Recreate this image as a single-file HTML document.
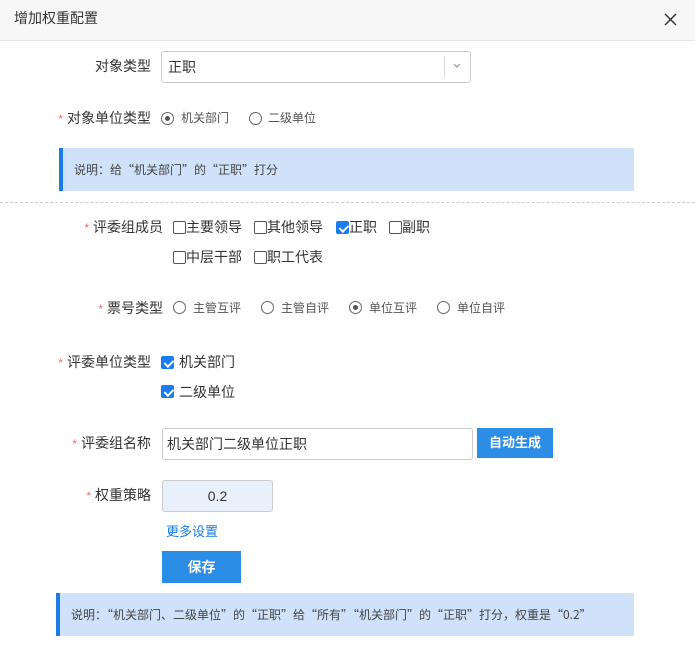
<!DOCTYPE html>
<html><head><meta charset="utf-8"><style>
*{margin:0;padding:0;box-sizing:border-box}
body{width:695px;height:648px;background:#fff;font-family:"Liberation Sans","Noto Sans CJK SC",sans-serif;color:#333;position:relative;overflow:hidden}
.a{position:absolute;white-space:nowrap}
.lbl{font-size:14px;text-align:right;line-height:20px}
.star{color:#f56c6c;font-size:12px;margin-right:4px}
.rad{position:absolute;width:13px;height:13px;border:1.5px solid #666;border-radius:50%}
.rad.on::after{content:"";position:absolute;left:2.5px;top:2.5px;width:5px;height:5px;border-radius:50%;background:#555}
.cb{position:absolute;width:13px;height:13px;border:1px solid #555;border-radius:2px;background:#fff}
.cb.on{background:#1a7cf2;border-color:#1a7cf2}
.cb.on::after{content:"";position:absolute;left:3.5px;top:0.5px;width:3.5px;height:7px;border:solid #fff;border-width:0 2px 2px 0;transform:rotate(45deg)}
.t12{font-size:12px;color:#555;line-height:16px}
.t14{font-size:14px;color:#333;line-height:20px}
.note{position:absolute;background:#cfe2fa;border-left:4px solid #1e7be6;font-size:12px;color:#444;padding-left:11px;font-family:"Noto Sans CJK SC",sans-serif}
</style></head><body>
<div class="a" style="left:0;top:0;width:695px;height:41px;background:#f7f7f7;border-bottom:1px solid #e6e6e6"></div>
<div class="a t14" style="left:14px;top:8px;font-size:14px">增加权重配置</div>
<svg class="a" style="left:664px;top:13px" width="13" height="13" viewBox="0 0 13 13"><path d="M1 1L12 12M12 1L1 12" stroke="#333" stroke-width="1.5"/></svg>

<div class="a lbl" style="left:60px;width:91px;top:56px">对象类型</div>
<div class="a" style="left:161px;top:51px;width:310px;height:32px;border:1px solid #ccc;border-radius:3px"></div>
<div class="a t14" style="left:168px;top:57px">正职</div>
<div class="a" style="left:444px;top:56px;width:1px;height:22px;background:#ddd"></div>
<svg class="a" style="left:453px;top:63px" width="8" height="6" viewBox="0 0 8 6"><path d="M1 1L4 4L7 1" stroke="#999" fill="none" stroke-width="1.2"/></svg>

<div class="a lbl" style="left:20px;width:131px;top:108px"><span class="star">*</span>对象单位类型</div>
<div class="rad on" style="left:161px;top:112px"></div><div class="a t12" style="left:181px;top:110px">机关部门</div>
<div class="rad" style="left:249px;top:112px"></div><div class="a t12" style="left:268px;top:110px">二级单位</div>

<div class="note" style="left:59px;top:148px;width:575px;height:43px;line-height:43px">说明：给“机关部门”的“正职”打分</div>
<div class="a" style="left:0;top:202px;width:695px;border-top:1px dashed #ccc"></div>

<div class="a lbl" style="left:40px;width:123px;top:217px"><span class="star">*</span>评委组成员</div>
<div class="cb" style="left:173px;top:221px"></div><div class="a t14" style="left:186px;top:217px">主要领导</div>
<div class="cb" style="left:254px;top:221px"></div><div class="a t14" style="left:267px;top:217px">其他领导</div>
<div class="cb on" style="left:336px;top:221px"></div><div class="a t14" style="left:349px;top:217px">正职</div>
<div class="cb" style="left:389px;top:221px"></div><div class="a t14" style="left:402px;top:217px">副职</div>
<div class="cb" style="left:173px;top:251px"></div><div class="a t14" style="left:186px;top:247px">中层干部</div>
<div class="cb" style="left:254px;top:251px"></div><div class="a t14" style="left:267px;top:247px">职工代表</div>

<div class="a lbl" style="left:40px;width:123px;top:298px"><span class="star">*</span>票号类型</div>
<div class="rad" style="left:173px;top:301px"></div><div class="a t12" style="left:193px;top:300px">主管互评</div>
<div class="rad" style="left:261px;top:301px"></div><div class="a t12" style="left:281px;top:300px">主管自评</div>
<div class="rad on" style="left:349px;top:301px"></div><div class="a t12" style="left:369px;top:300px">单位互评</div>
<div class="rad" style="left:437px;top:301px"></div><div class="a t12" style="left:457px;top:300px">单位自评</div>

<div class="a lbl" style="left:20px;width:131px;top:352px"><span class="star">*</span>评委单位类型</div>
<div class="cb on" style="left:161px;top:356px"></div><div class="a t14" style="left:179px;top:352px">机关部门</div>
<div class="cb on" style="left:161px;top:385px"></div><div class="a t14" style="left:179px;top:382px">二级单位</div>

<div class="a lbl" style="left:20px;width:131px;top:433px"><span class="star">*</span>评委组名称</div>
<div class="a" style="left:162px;top:428px;width:311px;height:32px;border:1px solid #ccc;border-radius:3px"></div>
<div class="a t14" style="left:167px;top:434px">机关部门二级单位正职</div>
<div class="a" style="left:477px;top:428px;width:76px;height:30px;background:#2b8de5;color:#fff;font-size:13px;font-weight:bold;text-align:center;line-height:30px">自动生成</div>

<div class="a lbl" style="left:20px;width:131px;top:485px"><span class="star">*</span>权重策略</div>
<div class="a" style="left:162px;top:480px;width:111px;height:32px;border:1px solid #ccc;border-radius:3px;background:#e8f0fb;text-align:center;line-height:30px;font-size:14px">0.2</div>
<div class="a" style="left:166px;top:522px;font-size:13px;color:#1a7be6;line-height:20px">更多设置</div>
<div class="a" style="left:162px;top:551px;width:79px;height:32px;background:#2b8de5;color:#fff;font-size:14px;font-weight:bold;text-align:center;line-height:32px">保存</div>

<div class="note" style="left:56px;top:593px;width:578px;height:43px;line-height:43px">说明：“机关部门、二级单位”的“正职”给“所有”“机关部门”的“正职”打分，权重是“0.2”</div>
</body></html>
